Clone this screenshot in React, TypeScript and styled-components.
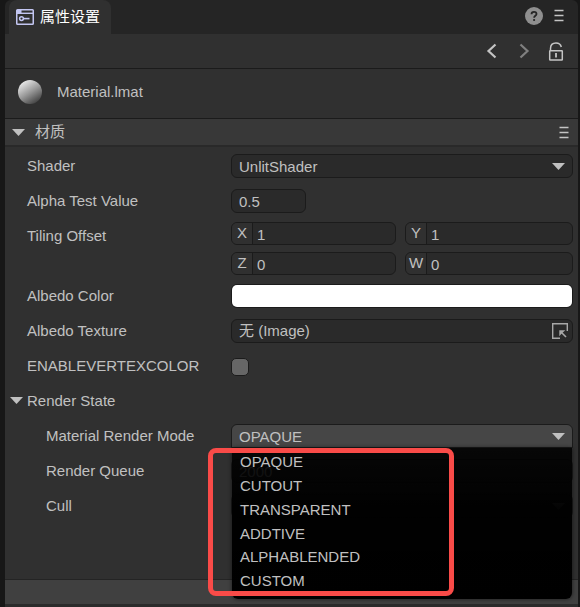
import React, { useId, useState } from "react";
import styled, { createGlobalStyle, css } from "styled-components";

const GlobalStyle = createGlobalStyle`
  *, *::before, *::after { box-sizing: border-box; }
  body {
    margin: 0;
    background: #171717;
    color: #c0c0c0;
    font: 15px/24px "Liberation Sans", "Noto Sans CJK SC", sans-serif;
  }
  input, select, button { font: inherit; color: inherit; }
`;

const Window = styled.main`
  display: flex;
  flex-direction: column;
  min-height: 100vh;
  padding: 0 2px 0 5px;
`;

const TabBar = styled.header`
  display: flex;
  align-items: flex-start;
  height: 34px;
  padding: 0 14px 0 4px;
  background: #252525;
  border-radius: 6px 6px 0 0;
`;

const Tab = styled.h1`
  display: flex;
  align-items: center;
  gap: 6px;
  height: 34px;
  margin: 0 auto 0 0;
  padding: 0 11px 0 7px;
  background: #303030;
  border-radius: 8px 8px 0 0;
  color: #fff;
  font-size: 15px;
  font-weight: 400;
`;

const IconButton = styled.button`
  display: flex;
  align-items: center;
  justify-content: center;
  padding: 0;
  border: 0;
  background: none;
  color: #c4c4c4;
  &:disabled { color: #808080; }
`;

const TabActions = styled.div`
  display: flex;
  align-items: center;
  gap: 11px;
  height: 31px;
`;

const Toolbar = styled.nav`
  display: flex;
  align-items: center;
  justify-content: flex-end;
  gap: 16px;
  height: 35px;
  padding: 0 14px 0 0;
  background: #303030;
  border-bottom: 1px solid #1b1b1b;
`;

const Asset = styled.div`
  display: flex;
  align-items: center;
  gap: 15px;
  height: 50px;
  padding: 0 13px 4px;
  background: #303030;
  border-bottom: 1px solid #1b1b1b;
`;

const SectionHeader = styled.div`
  display: flex;
  align-items: center;
  justify-content: space-between;
  height: 28px;
  padding: 0 9px 0 7px;
  background: #383838;
  border-bottom: 2px solid #292929;
`;

const Disclosure = styled.button<{ $gap: number }>`
  display: flex;
  align-items: center;
  gap: ${(p) => p.$gap}px;
  padding: 0;
  border: 0;
  background: none;
`;

const Body = styled.section`
  flex: 1;
  padding: 1px 5px 0 0;
  background: #303030;
`;

const Row = styled.div<{ $indent?: number }>`
  display: grid;
  grid-template-columns: 226px minmax(0, 1fr);
  min-height: 35px;
  > :first-child {
    padding-left: ${(p) => p.$indent ?? 22}px;
    line-height: 35px;
  }
`;

const Control = styled.div`
  position: relative;
  padding: 6px 0 5px;
`;

const GroupRow = styled.div`
  display: flex;
  height: 35px;
  padding-left: 5px;
`;

const field = css`
  width: 100%;
  height: 24px;
  border: 1px solid #1b1b1b;
  border-radius: 6px;
  background: #2a2a2a;
  outline: 0;
`;

const Select = styled.select<{ $open?: boolean }>`
  ${field}
  display: block;
  appearance: none;
  padding: 0 30px 2px 7px;
  ${(p) =>
    p.$open &&
    css`
      background: #464646;
      border-radius: 6px 6px 0 0;
    `}
`;

const SelectArrow = styled.span`
  position: absolute;
  top: 15px;
  right: 8px;
  display: flex;
  pointer-events: none;
`;

const NumberInput = styled.input<{ $short?: boolean }>`
  ${field}
  display: block;
  width: ${(p) => (p.$short ? "75px" : "100%")};
  padding: 2px 7px 0;
`;

const VectorGrid = styled.div`
  display: grid;
  grid-template-columns: 165fr 168fr;
  gap: 7px 9px;
  padding: 4px 0 3px;
`;

const Component = styled.label`
  ${field}
  display: flex;
  height: 23px;
  overflow: hidden;
`;

const Axis = styled.span`
  flex: none;
  width: 21px;
  border-right: 1px solid #1b1b1b;
  background: #303030;
  line-height: 20px;
  text-align: center;
`;

const AxisInput = styled.input`
  flex: 1;
  min-width: 0;
  padding: 2px 4px 0;
  border: 0;
  outline: 0;
  background: transparent;
`;

const ColorInput = styled.input`
  ${field}
  display: block;
  appearance: none;
  padding: 0;
  overflow: hidden;
  &::-webkit-color-swatch-wrapper { padding: 0; }
  &::-webkit-color-swatch { border: 0; }
`;

const AssetField = styled.div`
  ${field}
  display: flex;
  align-items: center;
  padding: 0 4px 0 7px;
`;

const AssetInput = styled.input`
  flex: 1;
  min-width: 0;
  height: 22px;
  padding: 0;
  border: 0;
  outline: 0;
  background: transparent;
`;

const Checkbox = styled.input`
  display: block;
  appearance: none;
  width: 18px;
  height: 18px;
  margin: 4px 0 0;
  border: 1px solid #1b1b1b;
  border-radius: 5px;
  background: #666;
  &:checked { background: #9a9a9a; }
`;

const Menu = styled.ul`
  position: absolute;
  z-index: 1;
  top: 30px;
  left: 1px;
  right: 1px;
  display: grid;
  grid-auto-rows: 1fr;
  height: 151px;
  margin: 0;
  padding: 2px 0 6px 8px;
  list-style: none;
  line-height: 23px;
  border-radius: 0 0 6px 6px;
  background: linear-gradient(rgba(0, 0, 0, 0.86), rgba(0, 0, 0, 0.98) 40%, #000);
  box-shadow: 0 0 4px rgba(0, 0, 0, 0.6);
`;

const Highlight = styled.div`
  position: absolute;
  z-index: 2;
  top: 30px;
  left: -23px;
  width: 246px;
  height: 148px;
  border: 5px solid #f94b48;
  border-radius: 8px;
  pointer-events: none;
`;

const Footer = styled.footer`
  height: 28px;
  border-top: 1px solid #242424;
  border-bottom: 3px solid #2b2b2b;
  background: #404040;
`;

const Triangle = () => (
  <svg width="13" height="7" viewBox="0 0 13 7" aria-hidden="true">
    <path d="M0 0h13L6.5 7z" fill="#c0c0c0" />
  </svg>
);

const ListIcon = () => (
  <svg width="10" height="13" viewBox="0 0 10 13" aria-hidden="true">
    <path d="M.5 1.500h9M.5 6.500h9M.5 11.500h9" stroke="currentColor" strokeWidth="1.300" />
  </svg>
);

const PanelIcon = () => (
  <svg width="18" height="16" viewBox="0 0 18 16" fill="none" stroke="#c3c6f2" aria-hidden="true">
    <rect x=".75" y=".75" width="16.500" height="14.500" rx=".8" strokeWidth="1.500" />
    <path d="M1 4.300h16" strokeWidth="1.400" />
    <path d="M1 2.500h4.500" strokeWidth="3" />
    <circle cx="5.500" cy="9.600" r="1.900" strokeWidth="1.500" />
    <path d="M7.500 9.600H13.500" strokeWidth="1.600" />
  </svg>
);

const HelpIcon = () => (
  <svg width="18" height="18" viewBox="0 0 18 18" fill="none" aria-hidden="true">
    <circle cx="9" cy="9" r="9" fill="#8f8f8f" />
    <path d="M6.500 7.200C6.500 5.600 7.500 4.800 9 4.800s2.500.9 2.500 2.200c0 1.700-2.400 1.800-2.400 3.700" stroke="#252525" strokeWidth="1.800" />
    <circle cx="9.100" cy="13" r="1.100" fill="#252525" />
  </svg>
);

const Chevron = ({ right }: { right?: boolean }) => (
  <svg width="16" height="16" viewBox="0 0 16 16" fill="none" aria-hidden="true">
    <path d={right ? "M4.500 1.500L11.500 8l-7 6.500" : "M11.500 1.500L4.500 8l7 6.500"} stroke="currentColor" strokeWidth="2.200" />
  </svg>
);

const UnlockIcon = () => (
  <svg width="16" height="19" viewBox="0 0 16 19" fill="none" stroke="currentColor" aria-hidden="true">
    <rect x="1.700" y="8.700" width="12.600" height="9.300" rx=".5" strokeWidth="1.500" />
    <path d="M2.500 8.500V6.500C2.500 3 4.800 1 8 1c2.700 0 4.700 1.500 5.300 4" strokeWidth="1.500" />
    <path d="M8 11v4.500" strokeWidth="1.800" />
  </svg>
);

const PickIcon = () => (
  <svg width="16" height="16" viewBox="0 0 16 16" fill="none" stroke="#a8a8a8" aria-hidden="true">
    <path d="M8 15.300H.7V.7h14.600V8" strokeWidth="1.400" />
    <path d="M14 14L9.500 9.500" strokeWidth="1.600" />
    <path d="M7.300 7.300h6l-2.200 2L9.200 11l-1.900 2.300z" fill="#a8a8a8" stroke="none" />
  </svg>
);

const Sphere = () => (
  <svg width="24" height="24" viewBox="0 0 24 24" aria-hidden="true">
    <defs>
      <linearGradient id="sphere" x1=".2" y1=".1" x2=".75" y2=".95">
        <stop offset="0" stopColor="#e6e6e6" />
        <stop offset=".5" stopColor="#999" />
        <stop offset="1" stopColor="#444" />
      </linearGradient>
    </defs>
    <circle cx="12" cy="12" r="12" fill="url(#sphere)" />
  </svg>
);

const MODES = ["OPAQUE", "CUTOUT", "TRANSPARENT", "ADDTIVE", "ALPHABLENDED", "CUSTOM"];

const TILING = [
  { axis: "X", value: 1 },
  { axis: "Y", value: 1 },
  { axis: "Z", value: 0 },
  { axis: "W", value: 0 },
];

type SelectRowProps = {
  label: string;
  options: string[];
  indent?: number;
  open?: boolean;
  children?: React.ReactNode;
};

function SelectRow({ label, options, indent, open, children }: SelectRowProps) {
  const id = useId();
  return (
    <Row $indent={indent}>
      <label htmlFor={id}>{label}</label>
      <Control>
        <Select id={id} $open={open} defaultValue={options[0]}>
          {options.map((o) => (
            <option key={o}>{o}</option>
          ))}
        </Select>
        <SelectArrow>
          <Triangle />
        </SelectArrow>
        {children}
      </Control>
    </Row>
  );
}

export default function App() {
  const [vertexColor, setVertexColor] = useState(false);
  return (
    <>
      <GlobalStyle />
      <Window>
        <TabBar>
          <Tab>
            <PanelIcon />
            属性设置
          </Tab>
          <TabActions>
            <IconButton aria-label="Help"><HelpIcon /></IconButton>
            <IconButton aria-label="Panel menu"><ListIcon /></IconButton>
          </TabActions>
        </TabBar>
        <Toolbar>
          <IconButton aria-label="Back"><Chevron /></IconButton>
          <IconButton aria-label="Forward" disabled><Chevron right /></IconButton>
          <IconButton aria-label="Lock"><UnlockIcon /></IconButton>
        </Toolbar>
        <Asset>
          <Sphere />
          <span>Material.lmat</span>
        </Asset>
        <SectionHeader>
          <Disclosure $gap={10} aria-expanded="true">
            <Triangle />
            材质
          </Disclosure>
          <IconButton aria-label="Section menu"><ListIcon /></IconButton>
        </SectionHeader>
        <Body>
          <SelectRow label="Shader" options={["UnlitShader"]} />
          <Row>
            <label htmlFor="alpha">Alpha Test Value</label>
            <Control>
              <NumberInput id="alpha" $short defaultValue="0.5" />
            </Control>
          </Row>
          <Row role="group" aria-labelledby="tiling">
            <span id="tiling">Tiling Offset</span>
            <VectorGrid>
              {TILING.map(({ axis, value }) => (
                <Component key={axis}>
                  <Axis>{axis}</Axis>
                  <AxisInput defaultValue={value} />
                </Component>
              ))}
            </VectorGrid>
          </Row>
          <Row>
            <label htmlFor="color">Albedo Color</label>
            <Control>
              <ColorInput id="color" type="color" defaultValue="#ffffff" />
            </Control>
          </Row>
          <Row>
            <label htmlFor="texture">Albedo Texture</label>
            <Control>
              <AssetField>
                <AssetInput id="texture" readOnly value="无 (Image)" />
                <IconButton aria-label="Pick texture"><PickIcon /></IconButton>
              </AssetField>
            </Control>
          </Row>
          <Row>
            <label htmlFor="vertex">ENABLEVERTEXCOLOR</label>
            <Control>
              <Checkbox
                id="vertex"
                type="checkbox"
                checked={vertexColor}
                onChange={(e) => setVertexColor(e.target.checked)}
              />
            </Control>
          </Row>
          <GroupRow>
            <Disclosure $gap={4} aria-expanded="true">
              <Triangle />
              Render State
            </Disclosure>
          </GroupRow>
          <SelectRow label="Material Render Mode" options={MODES} indent={41} open>
            <Menu role="listbox" aria-label="Material Render Mode">
              {MODES.map((mode, i) => (
                <li key={mode} role="option" aria-selected={i === 0}>
                  {mode}
                </li>
              ))}
            </Menu>
            <Highlight />
          </SelectRow>
          <Row $indent={41}>
            <label htmlFor="queue">Render Queue</label>
            <Control>
              <NumberInput id="queue" defaultValue="2000" />
            </Control>
          </Row>
          <SelectRow label="Cull" options={["Back"]} indent={41} />
        </Body>
        <Footer />
      </Window>
    </>
  );
}
